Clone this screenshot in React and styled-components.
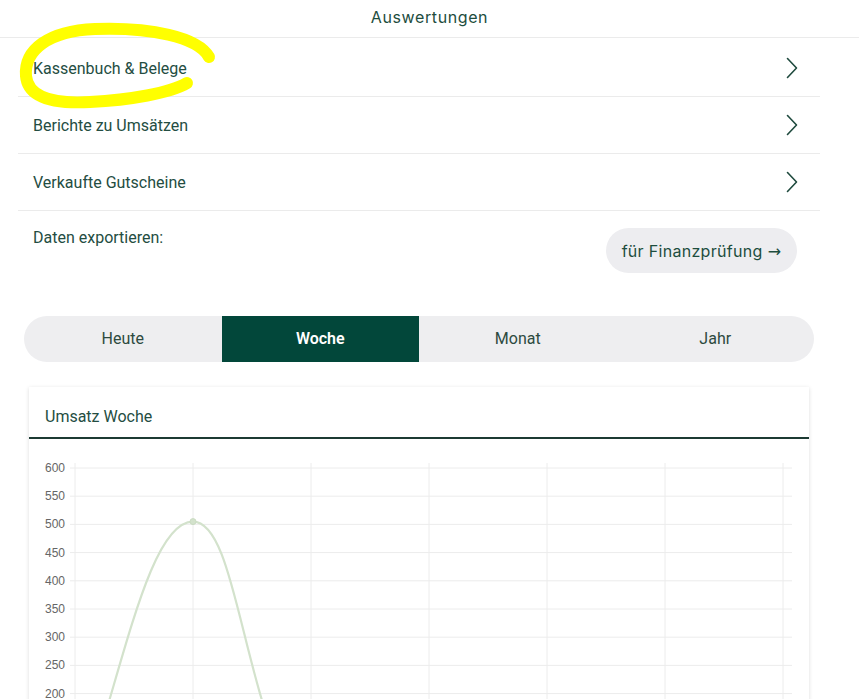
import React from "react";
import styled, { createGlobalStyle } from "styled-components";

const GlobalStyle = createGlobalStyle`
  html, body {
    margin: 0;
    padding: 0;
    background: #ffffff;
  }
  body {
    font-family: Roboto, "Liberation Sans", Arial, sans-serif;
    color: #214e40;
  }
  * {
    box-sizing: border-box;
  }
`;

const Page = styled.div`
  position: relative;
  width: 859px;
`;

const Header = styled.div`
  height: 38px;
  display: flex;
  align-items: center;
  justify-content: center;
  border-bottom: 1px solid #ebebeb;
  font-family: Inter, "Open Sans", sans-serif;
  font-size: 16px;
  letter-spacing: 0.6px;
  color: #1d4d3e;
  padding-bottom: 3px;
`;

const List = styled.ul`
  list-style: none;
  margin: 0 39px 0 18px;
  padding: 2px 0 0;
`;

const Item = styled.li`
  height: 57px;
  display: flex;
  align-items: center;
  justify-content: space-between;
  padding: 0 22px 0 15px;
  border-bottom: 1px solid #ebebeb;
  font-size: 16px;
  color: #244d42;
  cursor: pointer;
`;

const Chevron = () => (
  <svg width="12" height="22" viewBox="0 0 12 22">
    <polyline
      points="1.5,1.5 10.5,11 1.5,20.5"
      fill="none"
      stroke="#1f4a3e"
      strokeWidth="1.6"
      strokeLinecap="round"
      strokeLinejoin="round"
    />
  </svg>
);

const ExportRow = styled.div`
  display: flex;
  justify-content: space-between;
  align-items: flex-start;
  margin: 0 39px 0 18px;
  padding: 17px 23px 0 15px;
`;

const ExportLabel = styled.span`
  font-size: 16px;
  line-height: 20px;
  color: #244d42;
`;

const ExportButton = styled.button`
  height: 45px;
  width: 191px;
  padding: 0;
  border: none;
  border-radius: 23px;
  background: #ededf0;
  font-family: Inter, "Open Sans", sans-serif;
  font-size: 16px;
  letter-spacing: 0.3px;
  color: #1d4d3e;
  cursor: pointer;
`;

const Arrow = styled.span`
  font-family: "DejaVu Sans", sans-serif;
  font-size: 16px;
  margin-left: 5px;
`;

const Tabs = styled.div`
  margin: 43px 45px 0 24px;
  height: 46px;
  display: grid;
  grid-template-columns: repeat(4, 1fr);
  background: #eeeef0;
  border-radius: 23px;
  overflow: hidden;
`;

const Tab = styled.div`
  display: flex;
  align-items: center;
  justify-content: center;
  padding-bottom: 2px;
  font-size: 16px;
  font-weight: ${(props) => (props.active ? 600 : 400)};
  color: ${(props) => (props.active ? "#ffffff" : "#2d4a40")};
  background: ${(props) => (props.active ? "#02473a" : "transparent")};
  cursor: pointer;
`;

const Card = styled.div`
  margin: 25px 50px 0 29px;
  background: #ffffff;
  box-shadow: 0 1px 4px rgba(0, 0, 0, 0.14);
`;

const CardTitle = styled.div`
  height: 52px;
  display: flex;
  align-items: center;
  padding: 8px 16px 0;
  border-bottom: 2px solid #1c3a33;
  font-size: 16px;
  color: #244d42;
`;

const ChartBox = styled.div`
  height: 380px;
`;

const Highlight = styled.svg`
  position: absolute;
  top: 0;
  left: 0;
  pointer-events: none;
`;

const yTicks = [600, 550, 500, 450, 400, 350, 300, 250, 200, 150, 100, 50, 0];
const xLines = [46, 164, 282, 400, 518, 636, 754];
const top = 29;
const step = 28.2;

const Chart = () => (
  <svg width="780" height="380" viewBox="0 0 780 380">
    {yTicks.map((v, i) => {
      const y = top + i * step;
      return (
        <g key={v}>
          <line x1="41" x2="763" y1={y} y2={y} stroke="#ececec" strokeWidth="1" />
          <text
            x="36"
            y={y + 4}
            textAnchor="end"
            fontSize="12"
            fontFamily="'Liberation Sans', Arial, sans-serif"
            fill="#666"
          >
            {v}
          </text>
        </g>
      );
    })}
    {xLines.map((x) => (
      <line key={x} x1={x} x2={x} y1="24" y2="380" stroke="#ececec" strokeWidth="1" />
    ))}
    <path
      d="M46,367.4 C90,253.5 116.8,82.6 164,82.6 C211.2,82.6 213.8,285.1 282,367.4 L754,367.4"
      fill="none"
      stroke="#d3e2cc"
      strokeWidth="2.2"
    />
    <circle cx="164" cy="82.6" r="3" fill="#d3e2cc" stroke="#cbdcc3" strokeWidth="1" />
  </svg>
);

const rows = ["Kassenbuch & Belege", "Berichte zu Umsätzen", "Verkaufte Gutscheine"];
const tabs = ["Heute", "Woche", "Monat", "Jahr"];

export default function App() {
  return (
    <Page>
      <GlobalStyle />
      <Header>Auswertungen</Header>
      <List>
        {rows.map((r) => (
          <Item key={r}>
            {r}
            <Chevron />
          </Item>
        ))}
      </List>
      <ExportRow>
        <ExportLabel>Daten exportieren:</ExportLabel>
        <ExportButton>
          für Finanzprüfung<Arrow>→</Arrow>
        </ExportButton>
      </ExportRow>
      <Tabs>
        {tabs.map((t) => (
          <Tab key={t} active={t === "Woche"}>
            {t}
          </Tab>
        ))}
      </Tabs>
      <Card>
        <CardTitle>Umsatz Woche</CardTitle>
        <ChartBox>
          <Chart />
        </ChartBox>
      </Card>
      <Highlight width="240" height="120" viewBox="0 0 240 120">
        <path
          d="M209,57 C198,37 150,27 95,29 C48,31 24,50 26,76 C28,98 55,104 90,102 C130,100 170,93 187,83"
          fill="none"
          stroke="#ffff00"
          strokeWidth="12"
          strokeLinecap="round"
        />
      </Highlight>
    </Page>
  );
}
